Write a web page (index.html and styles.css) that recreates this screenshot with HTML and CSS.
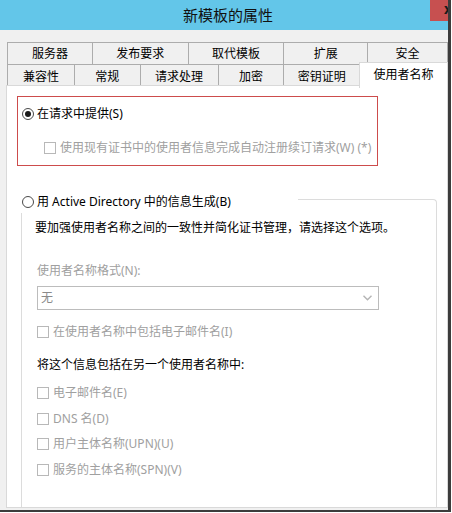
FILE: index.html
```html
<!DOCTYPE html>
<html lang="zh-CN">
<head>
<meta charset="utf-8">
<title>新模板的属性</title>
<link rel="stylesheet" href="styles.css">
</head>
<body>
<div class="window">
  <div class="titlebar"><span class="title">新模板的属性</span></div>
  <div class="close"><span class="close-x">x</span></div>
  <div class="content">
    <div class="tabs">
      <div class="tabrow row1">
        <div class="tab w86">服务器</div>
        <div class="tab w97">发布要求</div>
        <div class="tab w97">取代模板</div>
        <div class="tab w85">扩展</div>
        <div class="tab w81">安全</div>
      </div>
      <div class="tabrow row2">
        <div class="tab w68">兼容性</div>
        <div class="tab w67">常规</div>
        <div class="tab w79">请求处理</div>
        <div class="tab w67">加密</div>
        <div class="tab w77">密钥证明</div>
        <div class="tab w89 selected">使用者名称</div>
      </div>
    </div>
    <div class="panel">
      <div class="redbox">
        <div class="row first">
          <span class="radio checked"></span>
          <span class="label">在请求中提供(S)</span>
        </div>
        <div class="row sub">
          <span class="checkbox"></span>
          <span class="label disabled">使用现有证书中的使用者信息完成自动注册续订请求(W) (*)</span>
        </div>
      </div>
      <div class="group">
        <div class="legend">
          <span class="radio"></span>
          <span class="label">用 Active Directory 中的信息生成(B)</span>
        </div>
        <div class="desc">要加强使用者名称之间的一致性并简化证书管理，请选择这个选项。</div>
        <div class="fmt-label disabled">使用者名称格式(N):</div>
        <div class="select">
          <span class="select-text">无</span>
          <svg class="chev" width="9" height="6" viewBox="0 0 9 6"><polyline points="0.5,0.8 4.5,4.8 8.5,0.8" fill="none" stroke="#b4b4b4" stroke-width="1.4"/></svg>
        </div>
        <div class="row crow email">
          <span class="checkbox"></span>
          <span class="label disabled">在使用者名称中包括电子邮件名(I)</span>
        </div>
        <div class="heading">将这个信息包括在另一个使用者名称中:</div>
        <div class="opts">
          <div class="row crow"><span class="checkbox"></span><span class="label disabled">电子邮件名(E)</span></div>
          <div class="row crow"><span class="checkbox"></span><span class="label disabled">DNS 名(D)</span></div>
          <div class="row crow"><span class="checkbox"></span><span class="label disabled">用户主体名称(UPN)(U)</span></div>
          <div class="row crow"><span class="checkbox"></span><span class="label disabled">服务的主体名称(SPN)(V)</span></div>
        </div>
      </div>
    </div>
  </div>
</div>
</body>
</html>
```
FILE: styles.css
```css
html, body {
  margin: 0;
  padding: 0;
  background: #ffffff;
}
body {
  width: 452px;
  height: 513px;
  overflow: hidden;
  font-family: "Noto Sans", "Noto Sans CJK SC", sans-serif;
  font-size: 12px;
  color: #000;
}
.window {
  position: relative;
  width: 448px;
  height: 510px;
  background: #f0f0f0;
  border-right: 3px solid #3c3c3c;
  border-bottom: 2px solid #3c3c3c;
  display: flex;
  flex-direction: column;
  overflow: hidden;
}
.titlebar {
  height: 30px;
  flex: none;
  background: #63c6e9;
  display: flex;
  align-items: center;
  justify-content: center;
  padding-left: 8px;
  box-sizing: border-box;
}
.title {
  font-family: "Noto Sans CJK SC", sans-serif;
  font-size: 15px;
  line-height: 18px;
  color: #111;
}
.close {
  position: absolute;
  top: 0;
  right: 0;
  width: 18px;
  height: 21px;
  background: #c75050;
  overflow: hidden;
}
.close-x {
  position: absolute;
  left: 14px;
  top: 1px;
  font-size: 14px;
  font-weight: bold;
  line-height: 16px;
  color: #1a1a1a;
}
.content {
  flex: 1;
  display: flex;
  flex-direction: column;
  padding: 12px 0 2px 6px;
  min-height: 0;
}
.tabs {
  display: flex;
  flex-direction: column;
  padding-left: 1px;
  flex: none;
}
.tabrow {
  display: flex;
  height: 22px;
}
.tab {
  box-sizing: border-box;
  height: 22px;
  border: 1px solid #acacac;
  border-bottom: none;
  background: #f0f0f0;
  display: flex;
  align-items: center;
  justify-content: center;
  line-height: 16px;
  padding-top: 1px;
}
.tab + .tab { margin-left: -1px; }
.row2 .tab { height: 23px; }
.tab.selected {
  position: relative;
  z-index: 2;
  background: #fff;
  margin-top: -2px;
  height: 26px;
  padding-top: 0;
  align-items: flex-start;
  padding-top: 4px;
  border-color: #d9d9d9;
}
.w86 { width: 86px; }
.w97 { width: 97px; }
.w85 { width: 85px; }
.w81 { width: 81px; }
.w68 { width: 68px; }
.w67 { width: 67px; }
.w79 { width: 79px; }
.w77 { width: 77px; }
.w89 { width: 89px; }

.panel {
  flex: 1;
  margin-top: -1px;
  background: #fff;
  border: 1px solid #d9d9d9;
  box-sizing: border-box;
  overflow: hidden;
  min-height: 0;
  position: relative;
  z-index: 1;
}
.row {
  display: flex;
  align-items: center;
  height: 16px;
  line-height: 16px;
  white-space: nowrap;
}
.label { margin-left: 3px; }
.disabled { color: #a0a0a0; }

.radio {
  box-sizing: border-box;
  width: 12px;
  height: 12px;
  border-radius: 50%;
  border: 1px solid #4a4a4a;
  background: #fff;
  display: flex;
  align-items: center;
  justify-content: center;
  flex: none;
}
.radio.checked::after {
  content: "";
  width: 6px;
  height: 6px;
  border-radius: 50%;
  background: #1a1a1a;
}
.checkbox {
  box-sizing: border-box;
  width: 12px;
  height: 12px;
  border: 1px solid #b8b8b8;
  background: #fff;
  flex: none;
}
.checkbox + .label { margin-left: 4px; }

.redbox {
  box-sizing: border-box;
  margin: 10px 0 0 10px;
  width: 361px;
  height: 70px;
  border: 1px solid #cd4c4c;
  padding-left: 4px;
}
.redbox .first { margin-top: 9px; }
.redbox .sub { margin-top: 18px; padding-left: 22px; }

.group {
  position: relative;
  box-sizing: border-box;
  margin: 33px 0 0 14px;
  width: 416px;
  height: 330px;
  border: 1px solid #dcdcdc;
  border-bottom: none;
  border-radius: 0 4px 0 0;
}
.legend {
  position: absolute;
  top: -6px;
  left: -2px;
  width: 278px;
  height: 19px;
  padding-left: 2px;
  box-sizing: border-box;
  background: #fff;
  display: flex;
  align-items: flex-start;
  line-height: 16px;
  white-space: nowrap;
}
.legend .radio { margin-top: 2px; }
.desc {
  margin-top: 20px;
  padding-left: 13px;
  line-height: 16px;
  white-space: nowrap;
}
.fmt-label {
  margin-top: 27px;
  padding-left: 15px;
  line-height: 16px;
}
.select {
  box-sizing: border-box;
  margin: 7px 0 0 15px;
  width: 342px;
  height: 24px;
  border: 1px solid #bcbcbc;
  display: flex;
  align-items: center;
  justify-content: space-between;
  padding: 0 6px 0 3px;
  color: #8a8a8a;
}
.select-text { line-height: 16px; }
.chev { display: block; }
.crow { padding-left: 15px; }
.email { margin-top: 14px; }
.heading {
  margin-top: 17px;
  padding-left: 15px;
  line-height: 16px;
}
.opts {
  margin-top: 12px;
  display: flex;
  flex-direction: column;
  gap: 9.5px;
}
```
